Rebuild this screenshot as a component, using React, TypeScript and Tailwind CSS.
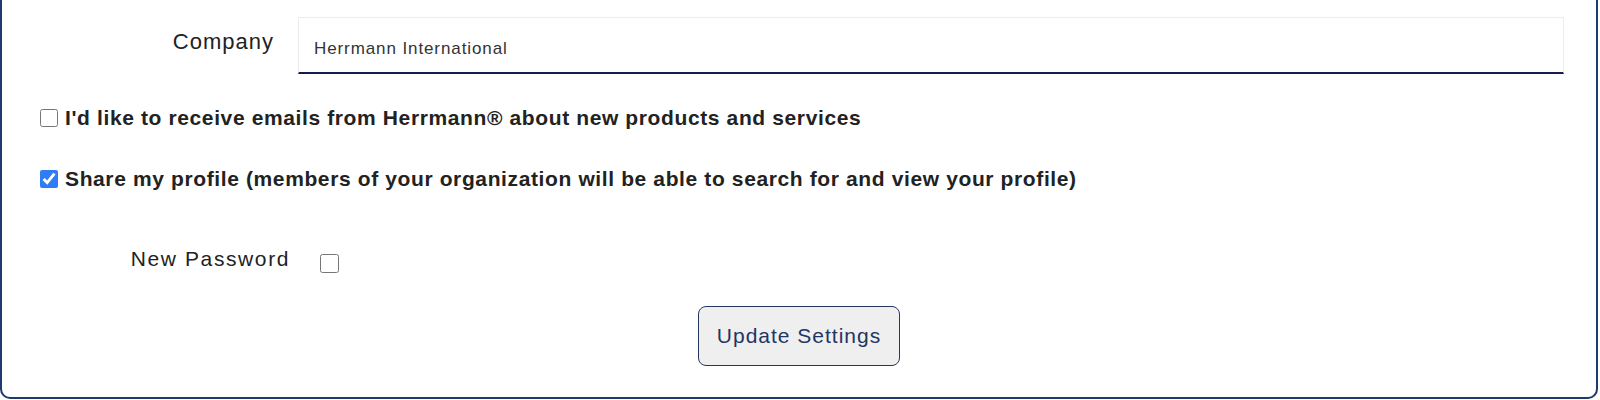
import React, { useState } from "react";

const font = { fontFamily: '"Helvetica Neue", "Liberation Sans", Arial, sans-serif' };

const CheckRow: React.FC<{ checked: boolean; onToggle: () => void; label: string }> = ({
  checked,
  onToggle,
  label,
}) => (
  <label className="flex items-center gap-[7px] cursor-pointer select-none">
    <input
      type="checkbox"
      checked={checked}
      onChange={onToggle}
      className="w-[18px] h-[18px] m-0 accent-[#2f7cf6]"
    />
    <span className="text-[21px] leading-[30px] font-bold text-[#222222] tracking-[0.62px]">{label}</span>
  </label>
);

export default function App() {
  const [company, setCompany] = useState("Herrmann International");
  const [emails, setEmails] = useState(false);
  const [share, setShare] = useState(true);
  const [newPassword, setNewPassword] = useState(false);

  return (
    <div className="w-full h-[400px] bg-white overflow-hidden" style={font}>
      <div className="w-[1598px] h-[399px] border-x-2 border-b-2 border-[#1d3a6c] rounded-b-[10px] flex flex-col">
        <div className="flex items-start pt-[17px] pr-[32px]">
          <label className="w-[272px] text-right text-[22px] leading-[30px] text-[#222222] pt-[10px] tracking-[1px]">
            Company
          </label>
          <input
            value={company}
            onChange={(e) => setCompany(e.target.value)}
            className="ml-[24px] flex-1 h-[57px] px-[15px] pt-[7px] text-[17px] font-light text-[#333333] tracking-[0.9px] bg-white border border-[#ececec] border-b-2 border-b-[#1a1b4d] outline-none"
          />
        </div>

        <div className="pl-[38px] mt-[29px]">
          <CheckRow
            checked={emails}
            onToggle={() => setEmails(!emails)}
            label="I'd like to receive emails from Herrmann® about new products and services"
          />
        </div>

        <div className="pl-[38px] mt-[31px]">
          <CheckRow
            checked={share}
            onToggle={() => setShare(!share)}
            label="Share my profile (members of your organization will be able to search for and view your profile)"
          />
        </div>

        <div className="flex items-center mt-[51px]">
          <span className="w-[288px] text-right text-[21px] leading-[28px] text-[#222222] tracking-[1.6px]">
            New Password
          </span>
          <input
            type="checkbox"
            checked={newPassword}
            onChange={() => setNewPassword(!newPassword)}
            className="ml-[30px] mt-[8px] w-[19px] h-[19px] accent-[#2f7cf6]"
          />
        </div>

        <div className="flex justify-center mt-[33px]">
          <button className="w-[202px] h-[60px] bg-[#efefef] border-[1.5px] border-[#26365e] rounded-[8px] text-[21px] text-[#1f3563] tracking-[1px]">
            Update Settings
          </button>
        </div>
      </div>
    </div>
  );
}
